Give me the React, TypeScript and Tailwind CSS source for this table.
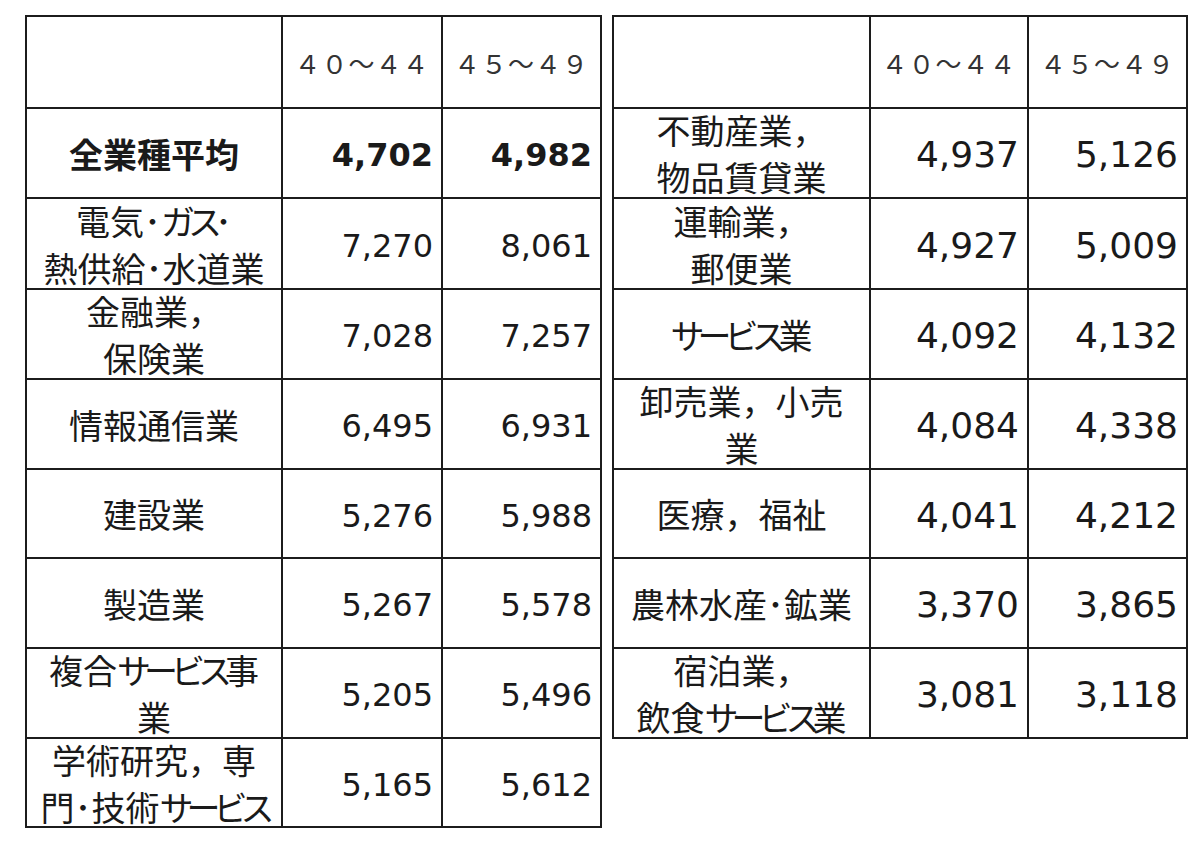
import React from 'react';

type Row = {
  label: string[];
  a: string;
  b: string;
  bold?: boolean;
};

const leftRows: Row[] = [
  { label: ['全業種平均'], a: '4,702', b: '4,982', bold: true },
  { label: ['電気･ガス･', '熱供給･水道業'], a: '7,270', b: '8,061' },
  { label: ['金融業，', '保険業'], a: '7,028', b: '7,257' },
  { label: ['情報通信業'], a: '6,495', b: '6,931' },
  { label: ['建設業'], a: '5,276', b: '5,988' },
  { label: ['製造業'], a: '5,267', b: '5,578' },
  { label: ['複合サービス事', '業'], a: '5,205', b: '5,496' },
  { label: ['学術研究，専', '門･技術サービス'], a: '5,165', b: '5,612' },
];

const rightRows: Row[] = [
  { label: ['不動産業，', '物品賃貸業'], a: '4,937', b: '5,126' },
  { label: ['運輸業，', '郵便業'], a: '4,927', b: '5,009' },
  { label: ['サービス業'], a: '4,092', b: '4,132' },
  { label: ['卸売業，小売', '業'], a: '4,084', b: '4,338' },
  { label: ['医療，福祉'], a: '4,041', b: '4,212' },
  { label: ['農林水産･鉱業'], a: '3,370', b: '3,865' },
  { label: ['宿泊業，', '飲食サービス業'], a: '3,081', b: '3,118' },
];

// katakana runs are narrower in the source font, squeeze them a bit
const withKana = (text: string) => {
  const parts = text.split(/([\u30A0-\u30FF]+)/);
  return parts.map((p, i) =>
    /[\u30A0-\u30FF]/.test(p) ? (
      <span key={i} className="tracking-[-7px]">
        {p}
      </span>
    ) : (
      <React.Fragment key={i}>{p}</React.Fragment>
    )
  );
};

const LabelCell = ({ row }: { row: Row }) => (
  <div
    className={`bg-white flex flex-col items-center justify-center text-center text-[34px] leading-[47px] text-[#1a1a1a] whitespace-nowrap font-['Noto_Sans_CJK_JP',sans-serif] ${
      row.bold ? 'font-bold' : 'font-normal'
    }`}
  >
    {row.label.map((line, i) => (
      <div key={i}>{withKana(line)}</div>
    ))}
  </div>
);

const NumCell = ({ value, bold, big }: { value: string; bold?: boolean; big?: boolean }) => (
  <div
    className={`bg-white flex items-center justify-end pr-[8px] pt-[4px] text-[#1a1a1a] font-['DejaVu_Sans',sans-serif] ${
      big ? 'text-[36px]' : 'text-[32px]'
    } ${bold ? 'font-bold' : 'font-normal'}`}
  >
    {value}
  </div>
);

const HeaderCell = ({ text }: { text?: string }) => (
  <div className="bg-white flex items-center justify-center text-[26px] text-[#333] font-['Noto_Sans_CJK_JP',sans-serif] tracking-[1px]">
    {text}
  </div>
);

export default function App() {
  return (
    <div className="bg-white w-[1200px] h-[852px] overflow-hidden pt-[15px] pl-[25px] flex items-start gap-[10px]">
      <div className="grid grid-cols-[254px_158px_157px] grid-rows-[90px_88px_89px_88px_88px_87px_88px_88px_87px] gap-[2px] p-[2px] bg-[#1c1c1c]">
        <HeaderCell />
        <HeaderCell text="４０～４４" />
        <HeaderCell text="４５～４９" />
        {leftRows.map((r, i) => (
          <React.Fragment key={i}>
            <LabelCell row={r} />
            <NumCell value={r.a} bold={r.bold} />
            <NumCell value={r.b} bold={r.bold} />
          </React.Fragment>
        ))}
      </div>
      <div className="grid grid-cols-[255px_156px_157px] grid-rows-[90px_88px_89px_88px_88px_87px_88px_88px] gap-[2px] p-[2px] bg-[#1c1c1c]">
        <HeaderCell />
        <HeaderCell text="４０～４４" />
        <HeaderCell text="４５～４９" />
        {rightRows.map((r, i) => (
          <React.Fragment key={i}>
            <LabelCell row={r} />
            <NumCell value={r.a} big />
            <NumCell value={r.b} big />
          </React.Fragment>
        ))}
      </div>
    </div>
  );
}
